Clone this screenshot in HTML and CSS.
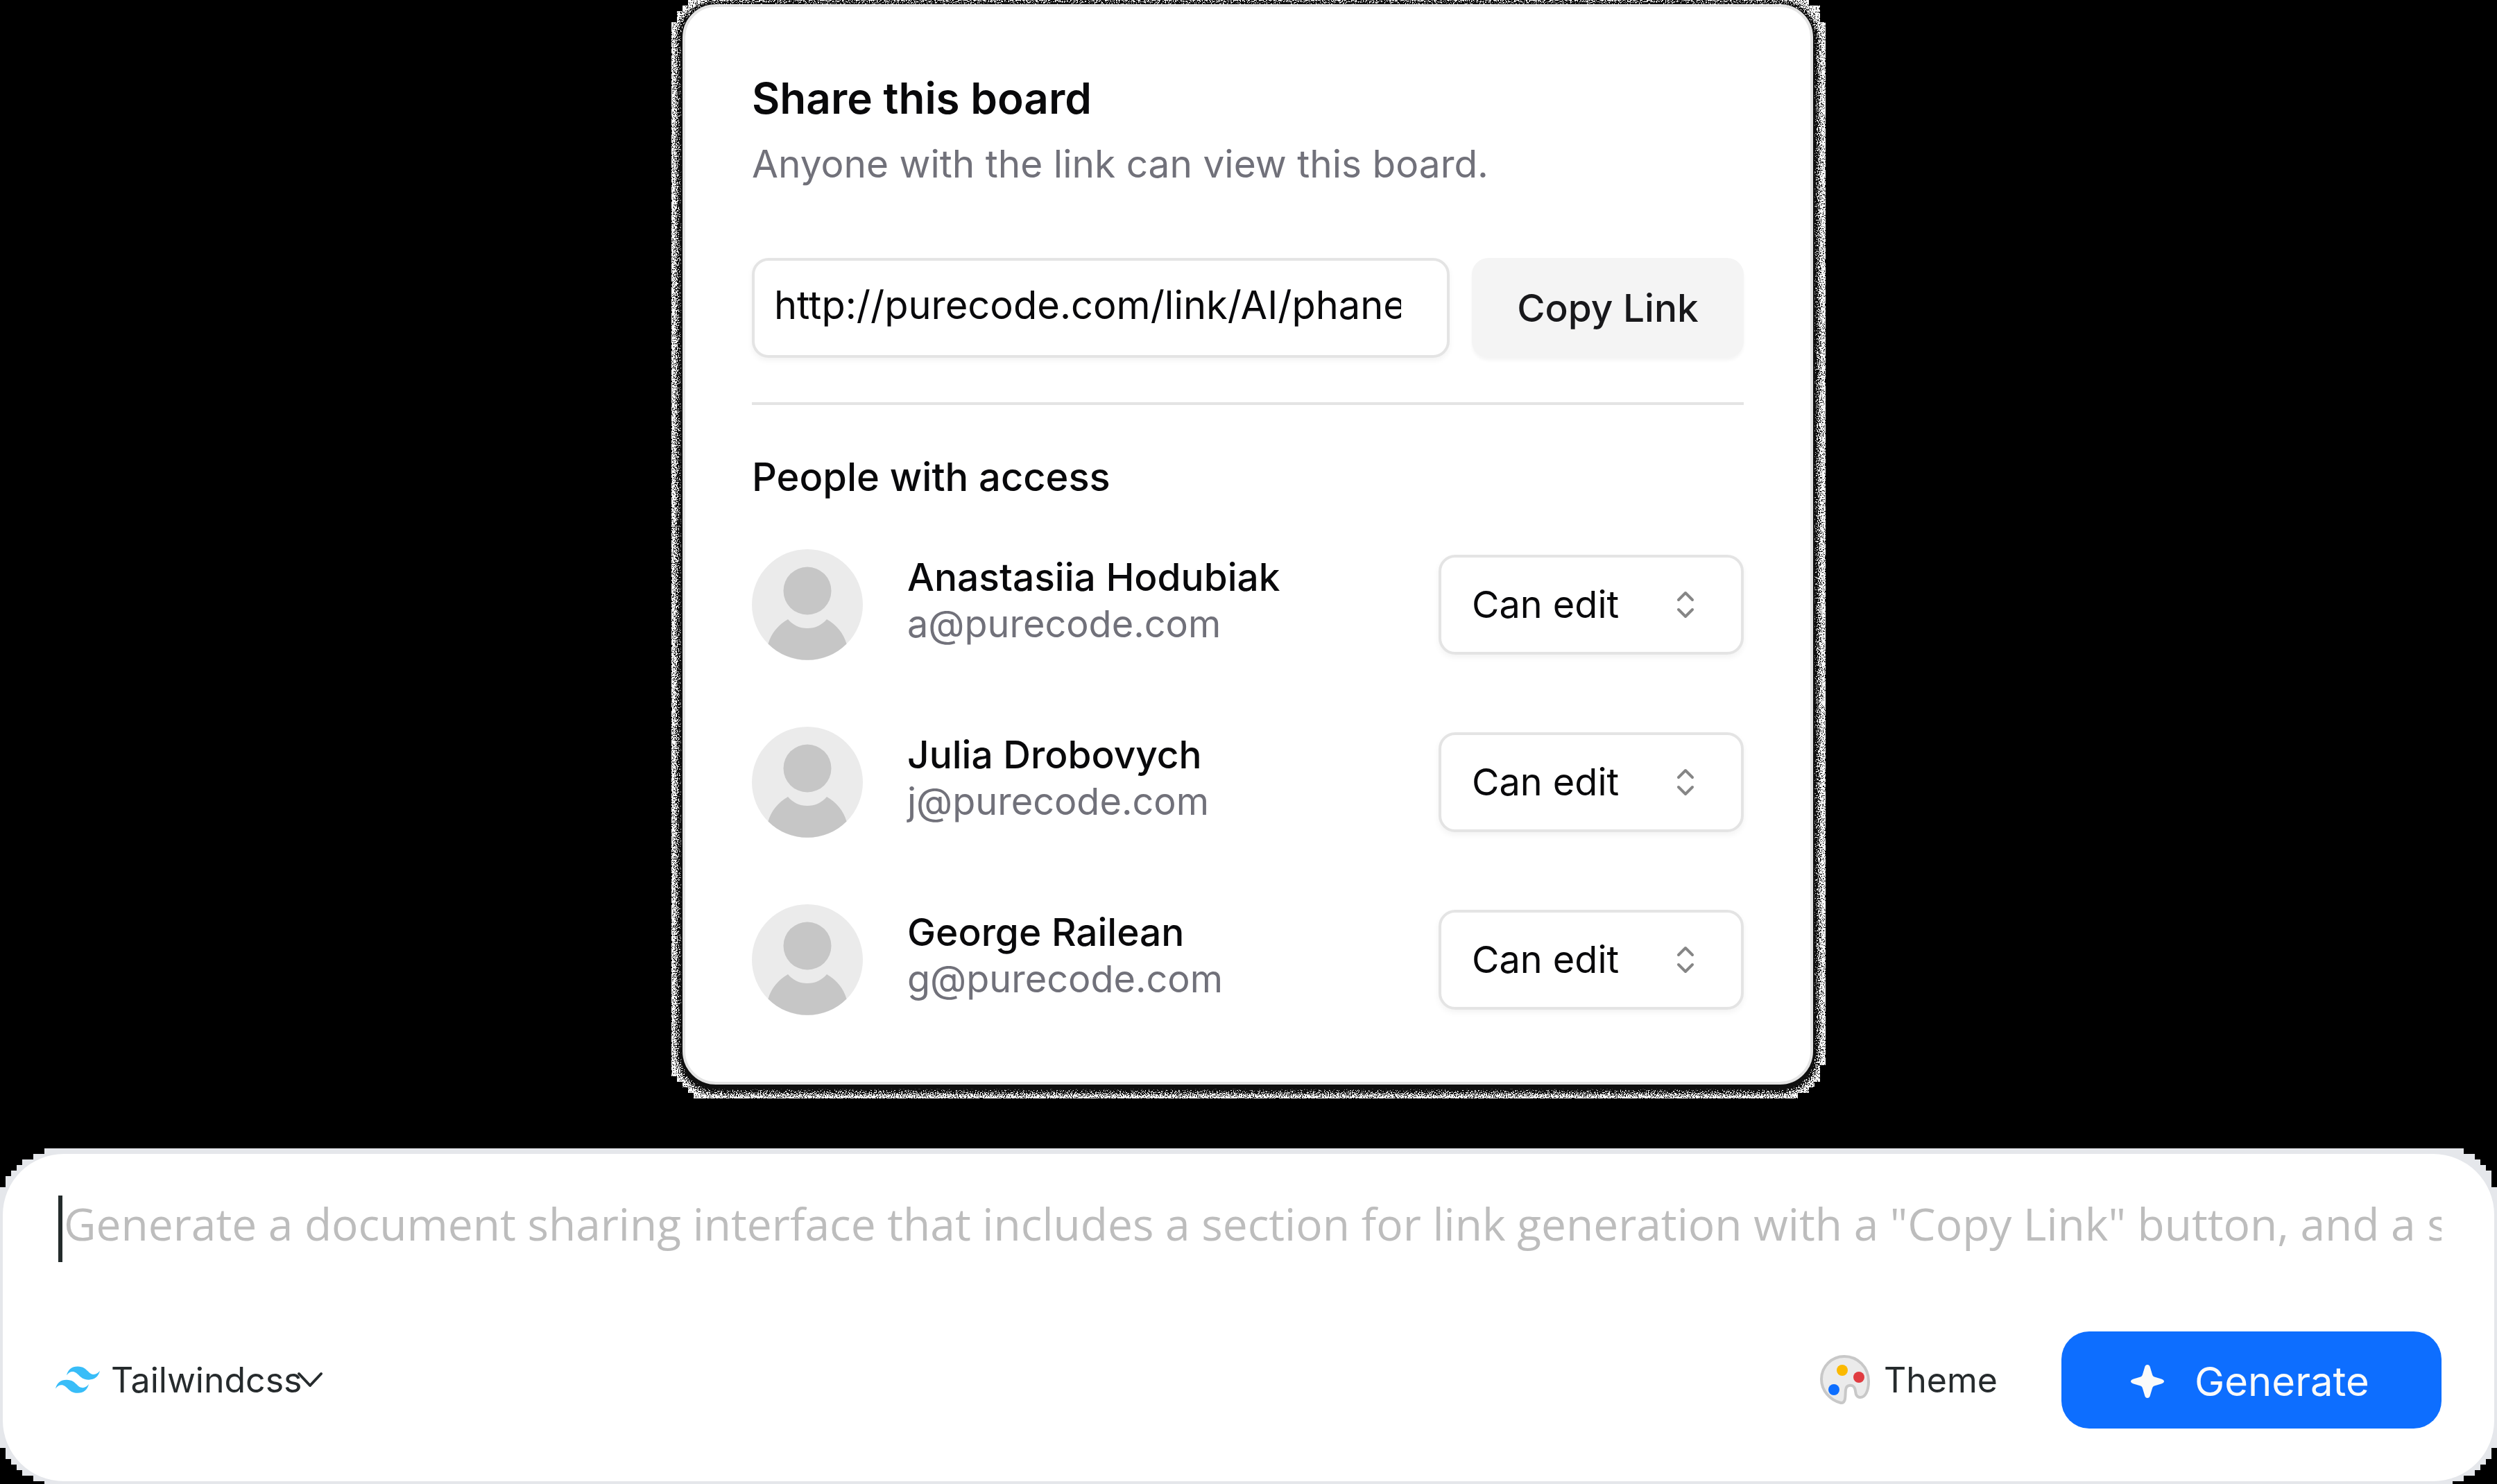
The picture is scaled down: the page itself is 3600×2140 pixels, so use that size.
FILE: index.html
```html
<!DOCTYPE html>
<html lang="en">
<head>
<meta charset="utf-8">
<title>Share this board</title>
<link rel="stylesheet" href="styles.css">
</head>
<body>
<svg class="defs" aria-hidden="true">
  <filter id="grain" x="0" y="0" width="100%" height="100%" color-interpolation-filters="sRGB">
    <feGaussianBlur in="SourceAlpha" stdDeviation="4" result="soft"/>
    <feTurbulence type="fractalNoise" baseFrequency="0.6" numOctaves="2" seed="4"/>
    <feColorMatrix values="0 0 0 0 0  0 0 0 0 0  0 0 0 0 0  3 0 0 0 -1" result="noise"/>
    <feComposite in="soft" in2="noise" operator="arithmetic" k1="0" k2="1" k3="1" k4="-0.55"/>
    <feColorMatrix values="0 0 0 0 .06  0 0 0 0 .06  0 0 0 0 .06  0 0 0 8 -2"/>
  </filter>
  <symbol id="avatar" viewBox="0 0 160 160">
    <circle cx="80" cy="80" r="80" fill="#ebebeb"/>
    <circle cx="80" cy="60" r="34.5" fill="#c6c6c6"/>
    <path d="M23.500 136.500C28 121 38 109 52 101C59 109.500 69 114 80 114S101 109.500 108 101C122 109 132 121 136.500 136.500A80 80 0 0 1 23.500 136.500Z" fill="#c6c6c6"/>
  </symbol>
  <symbol id="updown" viewBox="0 0 28 40">
    <path d="M4 13L14 3L24 13M4 27L14 37L24 27" fill="none" stroke="#868686" stroke-width="4" stroke-linecap="round" stroke-linejoin="round"/>
  </symbol>
</svg>

<main class="stage">
  <div class="frame">
    <section class="card">
      <h1 class="title">Share this board</h1>
      <p class="subtitle">Anyone with the link can view this board.</p>
      <div class="link-row">
        <input class="link-input" type="text" aria-label="Board link" value="http://purecode.com/link/AI/phanerai" readonly>
        <button class="copy" type="button">Copy Link</button>
      </div>
      <hr class="divider">
      <h2 class="section">People with access</h2>
      <ul class="people">
        <li class="person">
          <svg class="avatar" aria-hidden="true"><use href="#avatar"/></svg>
          <div class="who"><div class="name">Anastasiia Hodubiak</div><div class="mail">a@purecode.com</div></div>
          <div class="access">
            <select class="access-select" aria-label="Access for Anastasiia Hodubiak"><option>Can edit</option></select>
            <svg class="updown" aria-hidden="true"><use href="#updown"/></svg>
          </div>
        </li>
        <li class="person">
          <svg class="avatar" aria-hidden="true"><use href="#avatar"/></svg>
          <div class="who"><div class="name">Julia Drobovych</div><div class="mail">j@purecode.com</div></div>
          <div class="access">
            <select class="access-select" aria-label="Access for Julia Drobovych"><option>Can edit</option></select>
            <svg class="updown" aria-hidden="true"><use href="#updown"/></svg>
          </div>
        </li>
        <li class="person">
          <svg class="avatar" aria-hidden="true"><use href="#avatar"/></svg>
          <div class="who"><div class="name">George Railean</div><div class="mail">g@purecode.com</div></div>
          <div class="access">
            <select class="access-select" aria-label="Access for George Railean"><option>Can edit</option></select>
            <svg class="updown" aria-hidden="true"><use href="#updown"/></svg>
          </div>
        </li>
      </ul>
    </section>
  </div>
</main>

<form class="prompt">
  <div class="prompt-box">
    <input class="prompt-input" type="text" aria-label="Prompt" placeholder='Generate a document sharing interface that includes a section for link generation with a "Copy Link" button, and a section for people'>
    <div class="tools">
      <div class="framework">
        <svg class="tailwind" viewBox="0 0 54 33" aria-hidden="true"><path fill="#38bdf8" fill-rule="evenodd" d="M27 0c-7.200 0-11.700 3.600-13.500 10.800 2.700-3.600 5.850-4.950 9.450-4.050 2.054.513 3.522 2.004 5.147 3.653C30.744 13.090 33.808 16.200 40.500 16.200c7.200 0 11.700-3.600 13.500-10.800-2.700 3.600-5.850 4.950-9.450 4.050-2.054-.513-3.522-2.004-5.147-3.653C36.756 3.110 33.692 0 27 0zM13.500 16.200C6.300 16.200 1.800 19.800 0 27c2.700-3.600 5.850-4.950 9.450-4.050 2.054.514 3.522 2.004 5.147 3.653C17.244 29.290 20.308 32.400 27 32.400c7.200 0 11.700-3.600 13.500-10.800-2.700 3.600-5.850 4.950-9.450 4.050-2.054-.513-3.522-2.004-5.147-3.653C23.256 19.310 20.192 16.200 13.500 16.200z"/></svg>
        <select class="framework-select" aria-label="Framework"><option>Tailwindcss</option></select>
        <svg class="down" viewBox="0 0 38 24" aria-hidden="true"><path d="M3 3L19 20L35 3" fill="none" stroke="#262b2d" stroke-width="4" stroke-linecap="round" stroke-linejoin="round"/></svg>
      </div>
      <button class="theme" type="button">
        <svg class="palette" viewBox="0 0 72 72" aria-hidden="true">
          <path d="M30 69C14 65 2 51 2 35C2 16 17 2 35 2C54 2 70 17 70 38C70 52 65 62 57 61C50 60 52 52 50 48C48 42 38 42 37 50C36 57 38 70 30 69Z" fill="#ebebeb" stroke="#c8c8c8" stroke-width="4"/>
          <circle cx="32" cy="22" r="8" fill="#fbb900"/><circle cx="56" cy="32" r="8" fill="#e03c41"/><circle cx="20" cy="50" r="8" fill="#0d6eff"/>
        </svg>
        Theme
      </button>
      <button class="generate" type="submit">
        <svg class="spark" viewBox="0 0 48 48" aria-hidden="true"><path d="M24 0C26 0 27.500 1.500 28 4L31 14C31.500 16 32.500 17 34 17.500L44 20.500C46.500 21.300 48 22.500 48 24S46.500 26.700 44 27.500L34 30.500C32.500 31 31.500 32 31 34L28 44C27.500 46.500 26 48 24 48S20.500 46.500 20 44L17 34C16.500 32 15.500 31 14 30.500L4 27.500C1.500 26.700 0 25.500 0 24S1.500 21.300 4 20.500L14 17.500C15.500 17 16.500 16 17 14L20 4C20.500 1.500 22 0 24 0Z" fill="#fafafa"/></svg>
        Generate
      </button>
    </div>
  </div>
</form>
</body>
</html>
```

FILE: styles.css
```css
* { box-sizing: border-box; }

body {
  margin: 0;
  min-height: 100vh;
  display: flex;
  flex-direction: column;
  gap: 72px;
  background: #000;
  color: #09090b;
  font-family: Inter, "Liberation Sans", sans-serif;
  font-size: 56px;
  line-height: 80px;
}

h1, h2, p, ul { margin: 0; padding: 0; }
button, input, select { font: inherit; color: inherit; margin: 0; }
.defs { position: absolute; width: 0; height: 0; }

.stage { display: flex; justify-content: center; }

/* stepped outline round the share card */
.frame {
  position: relative;
  width: 100%;
  max-width: 1664px;
  padding: 6px 18px 20px 16px;
  background: #fafafa;
  clip-path: polygon(
    24px 0, calc(100% - 24px) 0, calc(100% - 24px) 8px, calc(100% - 8px) 8px,
    calc(100% - 8px) 32px, 100% 32px,
    100% calc(100% - 48px), calc(100% - 8px) calc(100% - 48px),
    calc(100% - 8px) calc(100% - 24px), calc(100% - 16px) calc(100% - 24px),
    calc(100% - 16px) calc(100% - 16px), calc(100% - 24px) calc(100% - 16px),
    calc(100% - 24px) calc(100% - 8px), calc(100% - 40px) calc(100% - 8px),
    calc(100% - 40px) 100%, 32px 100%,
    32px calc(100% - 8px), 24px calc(100% - 8px), 24px calc(100% - 16px),
    16px calc(100% - 16px), 16px calc(100% - 24px), 8px calc(100% - 24px),
    8px calc(100% - 32px), 0 calc(100% - 32px),
    0 32px, 8px 32px, 8px 16px, 16px 16px, 16px 8px, 24px 8px);
}

.frame::before {
  content: "";
  position: absolute;
  inset: -8px 0 0;
  border: solid transparent;
  border-width: 10px 11px 8px 9px;
  border-radius: 64px;
  background: #000 padding-box;
  filter: url(#grain);
}

.card {
  position: relative;
  padding: 92px 96px 96px;
  border: 4px solid #e4e4e4;
  border-radius: 48px;
  background: #fff;
}

.title { font-size: 62px; font-weight: 600; line-height: 80px; }
.subtitle { margin-top: 14px; color: #71717a; font-size: 55px; }

.link-row { display: flex; gap: 32px; margin-top: 96px; }

.link-input {
  flex: 1;
  min-width: 0;
  height: 144px;
  padding: 0 66px 8px 28px;
  border: 4px solid #e4e4e4;
  border-radius: 24px;
  background: #fff;
  box-shadow: 0 4px 8px rgba(0, 0, 0, .05);
}

.copy {
  width: 392px;
  height: 144px;
  padding: 0;
  border: 0;
  border-radius: 24px;
  background: #f4f4f4;
  box-shadow: 0 4px 4px rgba(0, 0, 0, .04);
  color: #18181b;
  font-size: 55px;
  font-weight: 500;
}

.divider { height: 4px; margin: 64px 0; border: 0; background: #e4e4e4; }
.section { font-size: 56px; font-weight: 500; line-height: 80px; }

.people { display: grid; gap: 96px; margin-top: 64px; list-style: none; }
.person { display: flex; align-items: center; gap: 64px; }
.avatar { width: 160px; height: 160px; }
.who { flex: 1; align-self: flex-start; padding-top: 6px; line-height: 68px; }
.name { font-size: 55px; font-weight: 500; }
.mail { color: #71717a; font-size: 54px; }

.access { position: relative; width: 440px; }
.access-select {
  width: 100%;
  height: 144px;
  padding: 0 44px;
  border: 4px solid #e4e4e4;
  border-radius: 24px;
  background: #fff;
  box-shadow: 0 4px 8px rgba(0, 0, 0, .05);
  font-size: 54px;
  appearance: none;
}
.updown {
  position: absolute;
  top: 52px;
  right: 70px;
  width: 28px;
  height: 40px;
  pointer-events: none;
}

/* prompt bar */
.prompt {
  flex: 1;
  display: flex;
  background: #e5e7eb;
  padding: 8px 4px 4px;
  clip-path: polygon(
    64px 0, calc(100% - 48px) 0,
    calc(100% - 48px) 8px, calc(100% - 32px) 8px, calc(100% - 32px) 16px,
    calc(100% - 24px) 16px, calc(100% - 24px) 24px, calc(100% - 16px) 24px,
    calc(100% - 16px) 32px, calc(100% - 8px) 32px, calc(100% - 8px) 56px, 100% 56px,
    100% calc(100% - 52px), calc(100% - 8px) calc(100% - 52px),
    calc(100% - 8px) calc(100% - 36px), calc(100% - 16px) calc(100% - 36px),
    calc(100% - 16px) calc(100% - 28px), calc(100% - 24px) calc(100% - 28px),
    calc(100% - 24px) calc(100% - 20px), calc(100% - 32px) calc(100% - 20px),
    calc(100% - 32px) calc(100% - 12px), calc(100% - 48px) calc(100% - 12px),
    calc(100% - 48px) calc(100% - 4px), calc(100% - 64px) calc(100% - 4px),
    calc(100% - 64px) 100%, 64px 100%,
    64px calc(100% - 4px), 48px calc(100% - 4px), 48px calc(100% - 12px),
    32px calc(100% - 12px), 32px calc(100% - 20px), 24px calc(100% - 20px),
    24px calc(100% - 28px), 16px calc(100% - 28px), 16px calc(100% - 36px),
    8px calc(100% - 36px), 8px calc(100% - 52px), 0 calc(100% - 52px),
    0 56px, 8px 56px, 8px 40px, 16px 40px, 16px 32px, 24px 32px, 24px 24px,
    32px 24px, 32px 16px, 48px 16px, 48px 8px, 64px 8px);
}

.prompt-box {
  flex: 1;
  min-width: 0;
  display: flex;
  flex-direction: column;
  gap: 100px;
  padding: 60px 76px 76px 80px;
  border-radius: 88px;
  background: #fff;
}

.prompt-input {
  width: 100%;
  height: 96px;
  padding: 0 0 16px 2px;
  border: 0;
  border-left: 6px solid #232b2b;
  background: none;
  font-family: "Open Sans", "Noto Sans", sans-serif;
  font-size: 64px;
}
.prompt-input::placeholder { color: #bdbdbd; opacity: 1; }

.tools { display: flex; align-items: center; color: #262b2d; font-size: 50px; }

.framework { display: flex; align-items: center; margin-right: auto; }
.tailwind { width: 64px; height: 40px; margin-left: -4px; }
.framework-select {
  margin-left: 16px;
  padding: 0;
  border: 0;
  background: none;
  appearance: none;
}
.down { width: 38px; height: 24px; margin-left: -8px; pointer-events: none; }

.theme {
  display: flex;
  align-items: center;
  gap: 20px;
  width: 264px;
  margin-right: 84px;
  padding: 0;
  border: 0;
  background: none;
}
.palette { width: 72px; height: 72px; }

.generate {
  display: flex;
  align-items: center;
  gap: 44px;
  width: 548px;
  height: 140px;
  padding: 4px 0 0 100px;
  border: 0;
  border-radius: 40px;
  background: #0d6eff;
  color: #fafafa;
  font-size: 58px;
}
.spark { width: 48px; height: 48px; }
```
